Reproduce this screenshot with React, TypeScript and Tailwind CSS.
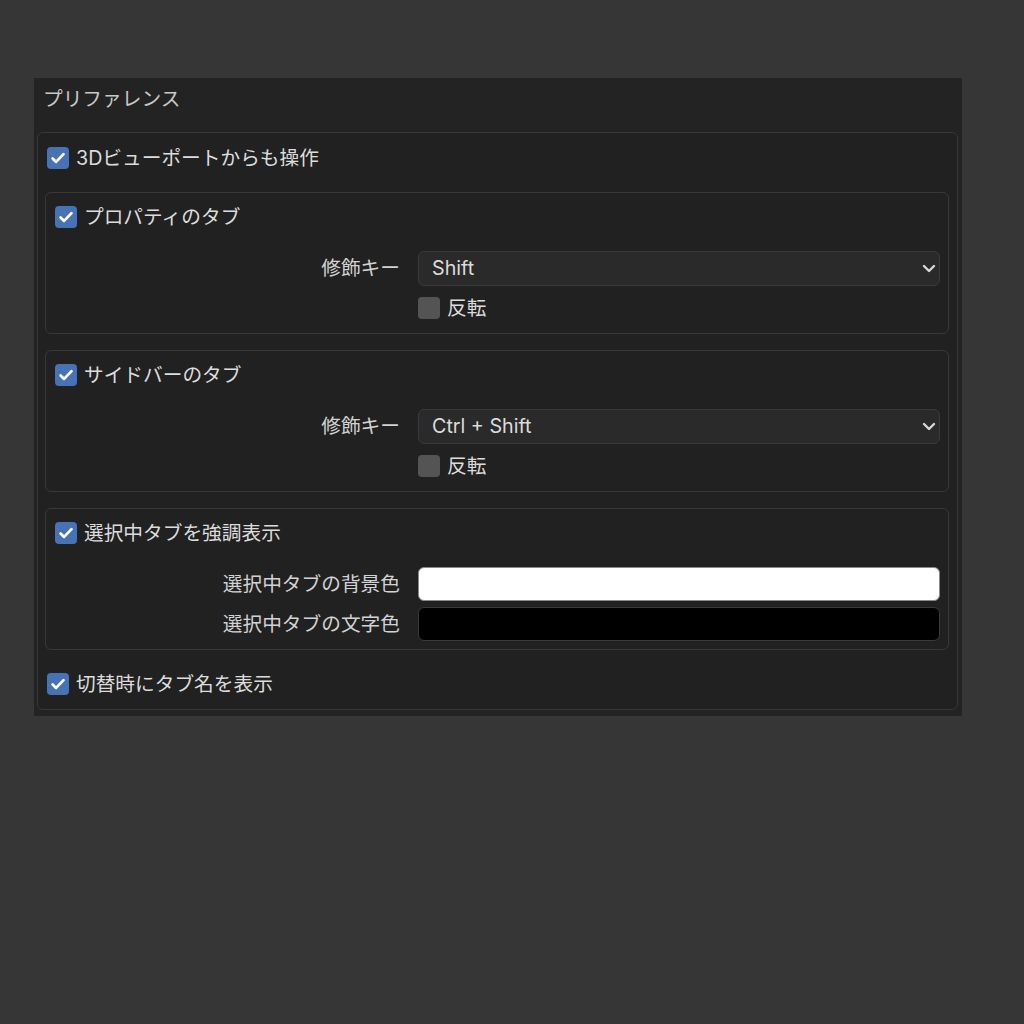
function Check({ checked }: { checked: boolean }) {
  return (
    <span
      className={`flex h-[22px] w-[22px] shrink-0 items-center justify-center rounded-[4px] ${
        checked ? 'bg-[#4772b3]' : 'bg-[#545454]'
      }`}
    >
      {checked && (
        <svg viewBox="0 0 16 16" className="h-[18px] w-[18px]" fill="none">
          <path d="M3.2 8.4l3.1 3.1L12.9 4.6" stroke="#ffffff" strokeWidth="2.4" strokeLinecap="round" strokeLinejoin="round" />
        </svg>
      )}
    </span>
  )
}

function CheckRow({ label, checked = true }: { label: string; checked?: boolean }) {
  return (
    <div className="flex h-10 items-center gap-[7px]">
      <Check checked={checked} />
      <span className="translate-y-[1px] text-[#dcdcdc]">{label}</span>
    </div>
  )
}

function FieldRow({ label, children }: { label?: string; children: React.ReactNode }) {
  return (
    <div className="flex h-10 items-center">
      <div className="w-[354px] shrink-0 translate-y-[1px] text-right text-[#d2d2d2]">{label}</div>
      <div className="ml-[18px] flex-1">{children}</div>
    </div>
  )
}

function Dropdown({ value }: { value: string }) {
  return (
    <div className="flex h-[35px] items-center justify-between rounded-[6px] border border-[#3a3a3a] bg-[#2a2a2a] pl-[13px] pr-[3px] text-[#dcdcdc]">
      <span className="translate-y-[1px]">{value}</span>
      <svg viewBox="0 0 14 9" className="h-[9px] w-[14px]" fill="none">
        <path d="M2 2l5 5 5-5" stroke="#d8d8d8" strokeWidth="2.4" strokeLinecap="round" strokeLinejoin="round" />
      </svg>
    </div>
  )
}

function TabGroup({ title, children }: { title: string; children: React.ReactNode }) {
  return (
    <div className="rounded-[6px] border border-[#383838] pl-[9px] pr-[8px] pt-[4px] pb-[5px]">
      <CheckRow label={title} />
      <div className="mt-[11px] -ml-[9px]">{children}</div>
    </div>
  )
}

export default function App() {
  return (
    <div
      className="min-h-screen bg-[#363636] pt-[78px] pl-[34px] text-[19.7px] leading-none"
      style={{ fontFamily: 'Inter, "Noto Sans CJK JP", sans-serif' }}
    >
      <div className="w-[928px] bg-[#232323] pl-[3px] pr-[4px] pb-[6px]">
        <div className="flex h-[42px] items-center pl-[6px] text-[#c8c8c8]">
          <span className="translate-y-[1px]">プリファレンス</span>
        </div>
        <div className="mt-[12px] rounded-[6px] border border-[#383838] bg-[#212121] pl-[7px] pr-[8px] pt-[5px] pb-[5px]">
          <div className="pl-[2px]">
            <CheckRow label="3Dビューポートからも操作" />
          </div>
          <div className="mt-[14px] flex flex-col gap-[16px]">
            <TabGroup title="プロパティのタブ">
              <FieldRow label="修飾キー">
                <Dropdown value="Shift" />
              </FieldRow>
              <FieldRow>
                <div className="flex items-center gap-[7px]">
                  <Check checked={false} />
                  <span className="translate-y-[1px] text-[#dcdcdc]">反転</span>
                </div>
              </FieldRow>
            </TabGroup>
            <TabGroup title="サイドバーのタブ">
              <FieldRow label="修飾キー">
                <Dropdown value="Ctrl + Shift" />
              </FieldRow>
              <FieldRow>
                <div className="flex items-center gap-[7px]">
                  <Check checked={false} />
                  <span className="translate-y-[1px] text-[#dcdcdc]">反転</span>
                </div>
              </FieldRow>
            </TabGroup>
            <TabGroup title="選択中タブを強調表示">
              <FieldRow label="選択中タブの背景色">
                <div className="h-[34px] rounded-[6px] border border-[#8a8a8a] bg-white" />
              </FieldRow>
              <FieldRow label="選択中タブの文字色">
                <div className="h-[34px] rounded-[6px] border border-[#3a3a3a] bg-black" />
              </FieldRow>
            </TabGroup>
          </div>
          <div className="mt-[14px] pl-[2px]">
            <CheckRow label="切替時にタブ名を表示" />
          </div>
        </div>
      </div>
    </div>
  )
}
